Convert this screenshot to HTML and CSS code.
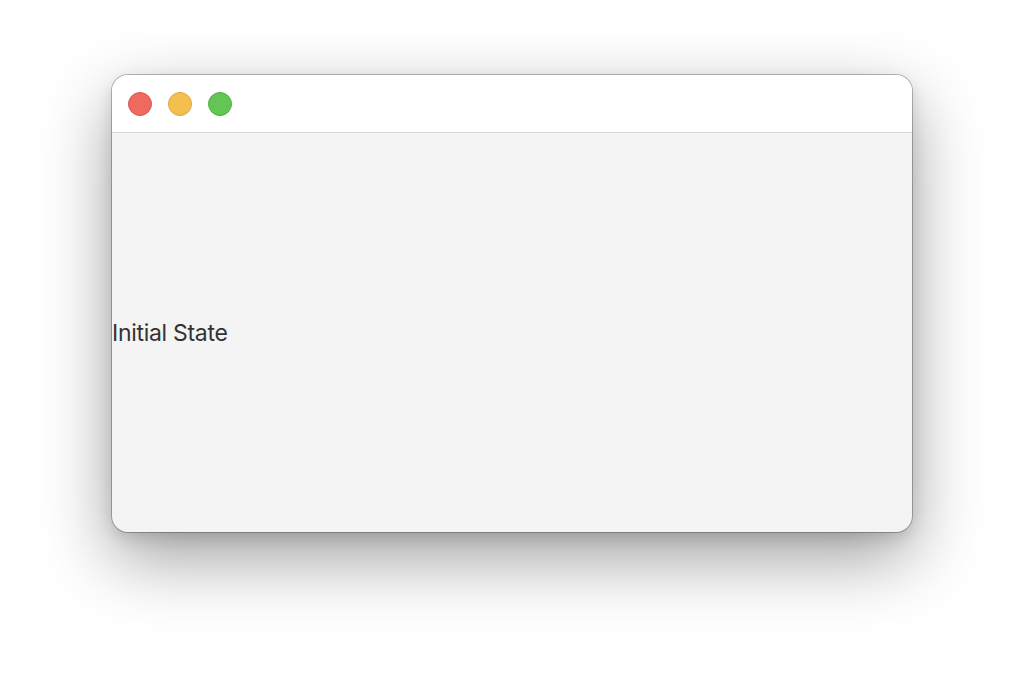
FILE: index.html
```html
<!DOCTYPE html>
<html>
<head>
<meta charset="utf-8">
<link rel="stylesheet" href="styles.css">
</head>
<body>
<div class="stage">
  <div class="window">
    <div class="titlebar">
      <span class="light red"></span>
      <span class="light yellow"></span>
      <span class="light green"></span>
    </div>
    <div class="content">
      <span class="label">Initial State</span>
    </div>
  </div>
</div>
</body>
</html>
```
FILE: styles.css
```css
html, body {
  margin: 0;
  padding: 0;
  background: #ffffff;
}
.stage {
  width: 1024px;
  height: 680px;
  box-sizing: border-box;
  padding: 75px 112px;
}
.window {
  width: 800px;
  height: 457px;
  box-sizing: border-box;
  border-radius: 16px;
  overflow: hidden;
  display: flex;
  flex-direction: column;
  background: #f4f4f4;
  box-shadow: 0 0 0 1px rgba(0,0,0,0.25), 0 26px 70px rgba(0,0,0,0.38), 0 6px 16px rgba(0,0,0,0.12);
}
.titlebar {
  height: 56px;
  flex: none;
  background: #ffffff;
  border-bottom: 1px solid #d6d6d6;
  display: flex;
  align-items: center;
  gap: 16px;
  padding: 0 16px;
  padding-top: 1px;
}
.light {
  width: 24px;
  height: 24px;
  box-sizing: border-box;
  border-radius: 50%;
  display: block;
}
.red { background: #ee6a5f; border: 1px solid #d65b50; }
.yellow { background: #f5bf4f; border: 1px solid #dba73d; }
.green { background: #62c554; border: 1px solid #53ac44; }
.content {
  flex: 1;
  display: flex;
  align-items: center;
}
.label {
  font-family: Inter, "Noto Sans", sans-serif;
  font-size: 23px;
  color: #333333;
  letter-spacing: -0.3px;
}
```
